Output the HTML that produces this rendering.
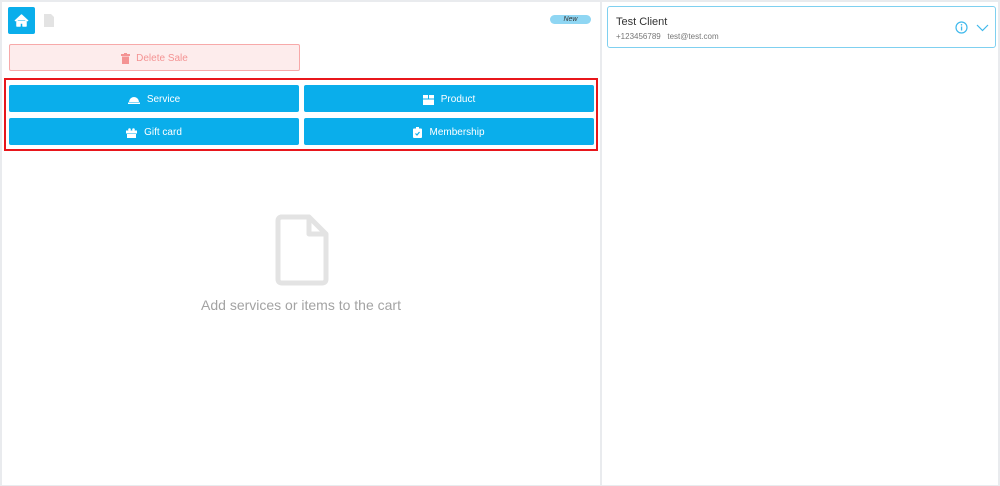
<!DOCTYPE html>
<html><head><style>
body{margin:0;width:1000px;height:486px;background:#e9ebee;font-family:"Liberation Sans",sans-serif;position:relative;overflow:hidden}
.left{position:absolute;left:2px;top:2px;width:598px;height:483px;background:#fff}
.right{position:absolute;left:602px;top:2px;width:396px;height:483px;background:#fff}
.home{position:absolute;left:8px;top:7px;width:27px;height:27px;background:#0aaeeb;border-radius:2px}
.btn{position:absolute;height:27px;background:#0aaeeb;border-radius:2px;color:#fff;font-size:10px;display:flex;align-items:center;justify-content:center;gap:7px;padding-top:2px;box-sizing:border-box}
.del{position:absolute;left:9px;top:44px;width:291px;height:27px;border:1px solid #f7a9a9;background:#fdecec;border-radius:2px;color:#f49393;font-size:10px;display:flex;align-items:center;justify-content:center;gap:6px;padding-top:2px;box-sizing:border-box}
.red{position:absolute;left:4px;top:78px;width:594px;height:73px;border:2px solid #e8161b;box-sizing:border-box}
.new{position:absolute;left:550px;top:15px;width:41px;height:9px;background:#8fd6f3;border-radius:5px;font-size:7px;font-style:italic;color:#333;text-align:center;line-height:9px}
.client{position:absolute;left:607px;top:6px;width:389px;height:42px;border:1px solid #7fd0f0;border-radius:3px;box-sizing:border-box;background:#fff}
</style></head><body>
<div class="left"></div><div class="right"></div>
<div class="home"><svg width="27" height="27" viewBox="0 0 27 27"><path d="M7 14 L13.5 8 L20 14 M9 13.5 V19 H12 V16 H15 V19 H18 V13.5" fill="#fff" stroke="#fff" stroke-width="1.5" stroke-linejoin="round"/></svg></div>
<svg style="position:absolute;left:44px;top:14px" width="10" height="13"><path d="M0 0H7L10 3V13H0Z" fill="#e3e3e3"/></svg>
<div class="new">New</div>
<div class="del"><svg width="9" height="11"><rect x="0" y="1" width="9" height="2" fill="#f49393"/><rect x="1" y="3.5" width="7" height="7.5" fill="#f49393"/><rect x="3" y="0" width="3" height="1.5" fill="#f49393"/></svg>Delete Sale</div>
<div class="red"></div>
<div class="btn" style="left:9px;top:85px;width:290px"><svg width="12" height="9"><path d="M1 7 A5 5 0 0 1 11 7Z" fill="#fff"/><rect x="0" y="7.5" width="12" height="1.5" fill="#fff"/></svg>Service</div>
<div class="btn" style="left:304px;top:85px;width:290px"><svg width="11" height="10"><rect x="0" y="0" width="5" height="3.5" fill="#fff"/><rect x="6" y="0" width="5" height="3.5" fill="#fff"/><rect x="0" y="4.5" width="11" height="5.5" fill="#fff"/></svg>Product</div>
<div class="btn" style="left:9px;top:118px;width:290px"><svg width="11" height="10"><rect x="0" y="2.5" width="11" height="3" fill="#fff"/><rect x="1" y="6" width="9" height="4" fill="#fff"/><circle cx="3.5" cy="1.5" r="1.3" fill="#fff"/><circle cx="7.5" cy="1.5" r="1.3" fill="#fff"/></svg>Gift card</div>
<div class="btn" style="left:304px;top:118px;width:290px"><svg width="9" height="11"><rect x="0" y="1.5" width="9" height="9.5" rx="1" fill="#fff"/><rect x="3" y="0" width="3" height="2" fill="#fff"/><path d="M2.5 6.5 L4 8 L6.5 5" stroke="#0aaeeb" stroke-width="1.2" fill="none"/></svg>Membership</div>
<svg style="position:absolute;left:275px;top:214px" width="54" height="72"><path d="M6 3H34L51 20V65Q51 69 47 69H7Q3 69 3 65V7Q3 3 7 3Z M34 3V20H51" fill="none" stroke="#e3e3e3" stroke-width="5" stroke-linejoin="round"/></svg>
<div style="position:absolute;left:0;width:602px;top:297px;text-align:center;font-size:14px;color:#a3a3a3">Add services or items to the cart</div>
<div class="client">
<div style="position:absolute;left:8px;top:9px;font-size:11px;color:#333">Test Client</div>
<div style="position:absolute;left:8px;top:25px;font-size:8px;color:#777">+123456789&nbsp;&nbsp; test@test.com</div>
<svg style="position:absolute;left:347px;top:14px" width="13" height="13"><circle cx="6.5" cy="6.5" r="5.5" fill="none" stroke="#3fb9ec" stroke-width="1.2"/><rect x="5.9" y="5.5" width="1.3" height="4" fill="#3fb9ec"/><circle cx="6.5" cy="3.8" r=".8" fill="#3fb9ec"/></svg>
<svg style="position:absolute;left:368px;top:17px" width="13" height="8"><path d="M1 1L6.5 6.5L12 1" fill="none" stroke="#3fb9ec" stroke-width="1.2"/></svg>
</div>
</body></html>
